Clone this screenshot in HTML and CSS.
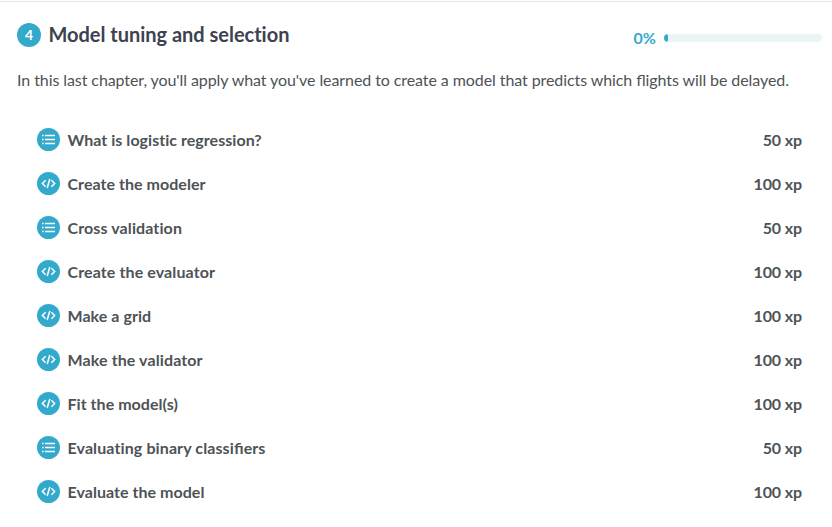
FILE: index.html
```html
<!DOCTYPE html>
<html lang="en">
<head>
<meta charset="utf-8">
<title>Model tuning and selection</title>
<link rel="stylesheet" href="styles.css">
</head>
<body>
<svg class="defs" aria-hidden="true">
<symbol id="list" viewBox="0 0 23 23"><circle cx="11.5" cy="11.5" r="11.5" fill="#33aacc"/><path d="M5 7.5h1.7M8 7.5h10M5 11.5h1.7M8 11.5h10M5 15.5h1.7M8 15.5h10" stroke="#fff" stroke-width="1.4"/></symbol>
<symbol id="code" viewBox="0 0 23 23"><circle cx="11.5" cy="11.5" r="11.5" fill="#33aacc"/><path d="M8.6 8.3L5.4 11.5l3.2 3.2M14.4 8.3l3.2 3.2-3.2 3.2M12.8 7l-2.6 9" fill="none" stroke="#fff" stroke-width="1.5"/></symbol>
</svg>
<section class="chapter">
<header class="head"><span class="number">4</span><h1>Model tuning and selection</h1><div class="progress"><span>0%</span><div class="bar"><div class="fill"></div></div></div></header>
<p class="description">In this last chapter, you'll apply what you've learned to create a model that predicts which flights will be delayed.</p>
<ul class="exercises">
<li><svg class="icon"><use href="#list"/></svg><span class="name">What is logistic regression?</span><span class="xp">50 xp</span></li>
<li><svg class="icon"><use href="#code"/></svg><span class="name">Create the modeler</span><span class="xp">100 xp</span></li>
<li><svg class="icon"><use href="#list"/></svg><span class="name wide">Cross validation</span><span class="xp">50 xp</span></li>
<li><svg class="icon"><use href="#code"/></svg><span class="name wide">Create the evaluator</span><span class="xp">100 xp</span></li>
<li><svg class="icon"><use href="#code"/></svg><span class="name">Make a grid</span><span class="xp">100 xp</span></li>
<li><svg class="icon"><use href="#code"/></svg><span class="name wide">Make the validator</span><span class="xp">100 xp</span></li>
<li><svg class="icon"><use href="#code"/></svg><span class="name">Fit the model(s)</span><span class="xp">100 xp</span></li>
<li><svg class="icon"><use href="#list"/></svg><span class="name wide">Evaluating binary <span class="ligatures">classifiers</span></span><span class="xp">50 xp</span></li>
<li><svg class="icon"><use href="#code"/></svg><span class="name">Evaluate the model</span><span class="xp">100 xp</span></li>
</ul>
</section>
</body>
</html>
```
FILE: styles.css
```css
* { box-sizing: border-box; }
body { margin: 0; background: #fff; color: #4d5356; font: 16px/24px Lato, sans-serif; overflow: hidden; }
.defs { display: none; }
.chapter { border-top: 1px solid #e6e6e6; margin-top: 1px; padding: 20px 10px 0 17px; }
.head { display: flex; align-items: center; height: 26px; }
.number { width: 24px; height: 24px; border-radius: 50%; background: #3ac; color: #fff; font-size: 14px; line-height: 24px; text-align: center; font-weight: 700; }
h1 { margin: -2px 0 0 7.5px; color: #3d4251; font-size: 20px; line-height: 26px; font-weight: 700; letter-spacing: -.02px; }
.progress { display: flex; align-items: center; gap: 8px; margin: 6px 0 0 auto; color: #3ac; font-weight: 700; }
.bar { width: 158px; height: 8px; border-radius: 4px; background: #ebf4f7; overflow: hidden; }
.fill { width: 4px; height: 8px; border-radius: 4px; background: #3ac; }
.description { margin: 20px 0 0; letter-spacing: -.083px; font-feature-settings: "liga" 1; }
.exercises { list-style: none; margin: 26px 20px 0; padding: 0; font-weight: 700; }
.exercises li { display: flex; align-items: center; height: 44px; }
.icon { width: 23px; height: 23px; margin: -2px 7.5px 0 0; }
.name { letter-spacing: .04px; }
.wide { letter-spacing: .11px; }
.ligatures { font-feature-settings: "liga" 1; }
.xp { margin-left: auto; letter-spacing: -.12px; }
```
